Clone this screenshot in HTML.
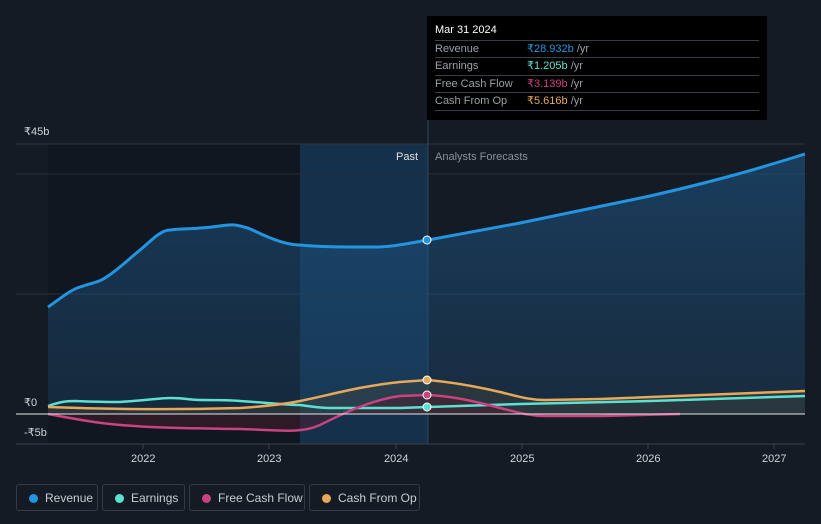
<!DOCTYPE html>
<html><head><style>
body{margin:0;width:821px;height:524px;background:#151b25;font-family:"Liberation Sans",sans-serif;overflow:hidden;position:relative}
.lg{position:absolute;top:484px;height:27px;border:1px solid #353c47;border-radius:3px;color:#c9ccd1;font-size:12px;line-height:27px;box-sizing:border-box}
.lg i{position:absolute;left:12px;top:9px;width:9px;height:9px;border-radius:50%}
.lg span{position:absolute;left:28px}
.tt{position:absolute;left:427px;top:16px;width:340px;height:104px;background:#000;font-size:11px;color:#9aa0a8}
.tt .r{position:absolute;left:8px;width:324px;border-top:1px solid #3a3f47;height:17px;line-height:17px}
.tt b{position:absolute;left:92px;font-weight:normal}
</style></head><body>
<svg width="821" height="524" style="position:absolute;left:0;top:0">
<defs>
<linearGradient id="g" x1="0" y1="0" x2="0" y2="1"><stop offset="0" stop-color="#1d5a8c" stop-opacity=".55"/><stop offset="1" stop-color="#1d4a70" stop-opacity=".35"/></linearGradient>
</defs>
<rect x="48" y="144" width="380" height="300" fill="#111720"/>
<rect x="300" y="144" width="128" height="300" fill="#14304a"/>
<line x1="16" y1="144" x2="805" y2="144" stroke="#2e3440"/>
<line x1="16" y1="174" x2="805" y2="174" stroke="#262c36"/>
<line x1="16" y1="294" x2="805" y2="294" stroke="#2a303a"/>
<line x1="16" y1="444" x2="805" y2="444" stroke="#3a404a"/>
<line x1="428" y1="120" x2="428" y2="444" stroke="#2a4a66"/>
<path d="M48,307 C60,299 70,290 80,287 C95,282 100,282 108,276 C120,268 130,258 140,250 C150,242 160,230 170,230 C185,228 195,229 200,228 C220,227 225,224 235,225 C250,227 255,232 268,237 C280,242 290,245 300,245 C320,247 340,247 375,247 C390,247 400,245 428,240 L520,223 L650,196 C720,180 760,168 805,154 L805,414 L48,414 Z" fill="url(#g)"/>
<path d="M48,407 C100,409 170,410 240,408 C270,406 290,403 300,401 C330,395 360,386 400,382 L428,380 C450,382 470,385 500,392 C520,397 530,400 545,400 L600,399 L805,391 L805,414 L48,414Z" fill="#4a4a3a" opacity=".35"/>
<path d="M48,414 C70,418 90,422 110,424 C140,427 160,428 240,429 C280,430 300,434 320,425 C340,415 370,400 400,396 L428,395 C450,396 470,400 500,408 C520,413 530,416 545,416 L600,416 L680,414 L48,414Z" fill="#4a1e2e" opacity=".5"/>
<path d="M48,307 C60,299 70,290 80,287 C95,282 100,282 108,276 C120,268 130,258 140,250 C150,242 160,230 170,230 C185,228 195,229 200,228 C220,227 225,224 235,225 C250,227 255,232 268,237 C280,242 290,245 300,245 C320,247 340,247 375,247 C390,247 400,245 428,240 L520,223 L650,196 C720,180 760,168 805,154" fill="none" stroke="#2394df" stroke-width="3"/>
<path d="M48,406 C60,402 65,401 75,401 C100,402 110,402 120,402 C150,400 160,398 170,398 C185,398 190,400 200,400 C220,400 230,400 240,401 C270,403 285,405 300,405 C315,407 320,408 330,408 L400,408 L428,407 L520,404 L650,401 L805,396" fill="none" stroke="#5ee0d0" stroke-width="2.5"/>
<path d="M48,414 C70,418 90,422 110,424 C140,427 160,428 240,429 C280,430 300,434 320,425 C340,415 370,400 400,396 L428,395 C450,396 470,400 500,408 C520,413 530,416 545,416 L600,416 L680,414" fill="none" stroke="#c8437f" stroke-width="2.5"/>
<path d="M48,407 C100,409 170,410 240,408 C270,406 290,403 300,401 C330,395 360,386 400,382 L428,380 C450,382 470,385 500,392 C520,397 530,400 545,400 L600,399 L805,391" fill="none" stroke="#e8a85a" stroke-width="2.5"/>
<line x1="16" y1="414" x2="805" y2="414" stroke="#e8e8e8" stroke-width="1"/>
<circle cx="427" cy="240" r="4" fill="#2394df" stroke="#fff" stroke-width="1"/>
<circle cx="427" cy="380" r="4" fill="#e8a85a" stroke="#fff" stroke-width="1"/>
<circle cx="427" cy="395" r="4" fill="#c8437f" stroke="#fff" stroke-width="1"/>
<circle cx="427" cy="407" r="4" fill="#5ee0d0" stroke="#fff" stroke-width="1"/>
<g font-size="11" fill="#d0d3d8">
<text x="24" y="135">₹45b</text><text x="24" y="406">₹0</text><text x="24" y="436">-₹5b</text>
<text x="131" y="462">2022</text><text x="257" y="462">2023</text><text x="384" y="462">2024</text><text x="510" y="462">2025</text><text x="636" y="462">2026</text><text x="762" y="462">2027</text>
<text x="396" y="160" fill="#e0e0e0">Past</text><text x="435" y="160" fill="#8a9098">Analysts Forecasts</text>
</g>
<g stroke="#3a404a"><line x1="143" y1="444" x2="143" y2="449"/><line x1="269" y1="444" x2="269" y2="449"/><line x1="396" y1="444" x2="396" y2="449"/><line x1="522" y1="444" x2="522" y2="449"/><line x1="648" y1="444" x2="648" y2="449"/><line x1="774" y1="444" x2="774" y2="449"/></g>
</svg>
<div class="tt">
<div style="position:absolute;left:8px;top:8px;color:#fff;font-size:11px">Mar 31 2024</div>
<div class="r" style="top:24px">Revenue<b><span style="color:#2394df">₹28.932b</span> /yr</b></div>
<div class="r" style="top:41px">Earnings<b><span style="color:#5ee0d0">₹1.205b</span> /yr</b></div>
<div class="r" style="top:59px">Free Cash Flow<b><span style="color:#c8437f">₹3.139b</span> /yr</b></div>
<div class="r" style="top:76px">Cash From Op<b><span style="color:#e8a85a">₹5.616b</span> /yr</b></div>
<div class="r" style="top:94px;height:0"></div>
</div>
<div class="lg" style="left:16px;width:82px"><i style="background:#2394df"></i><span>Revenue</span></div>
<div class="lg" style="left:102px;width:83px"><i style="background:#5ee0d0"></i><span>Earnings</span></div>
<div class="lg" style="left:189px;width:116px"><i style="background:#c8437f"></i><span>Free Cash Flow</span></div>
<div class="lg" style="left:309px;width:111px"><i style="background:#e8a85a"></i><span>Cash From Op</span></div>
</body></html>
